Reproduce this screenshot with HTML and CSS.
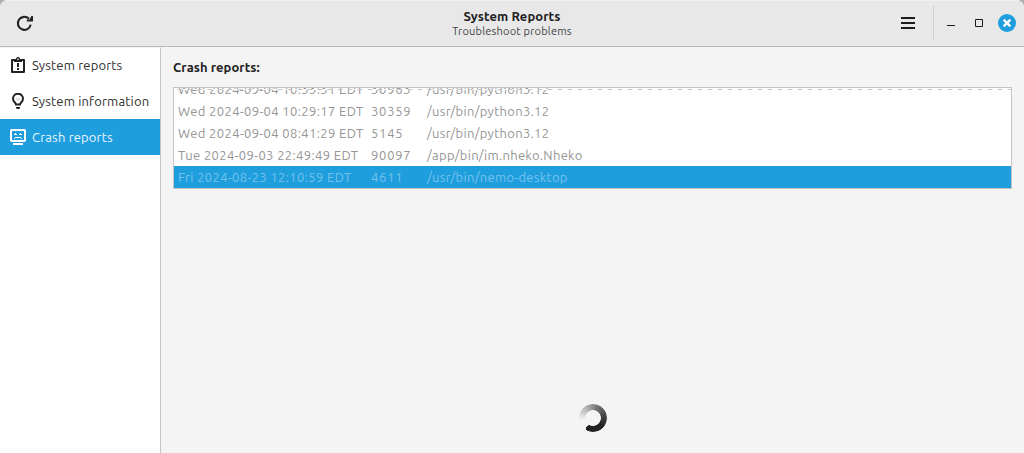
FILE: index.html
```html
<!DOCTYPE html>
<html lang="en">
<head>
<meta charset="utf-8">
<title>System Reports</title>
<link rel="stylesheet" href="styles.css">
</head>
<body>
<div class="window">
  <header class="titlebar">
    <button class="refresh" aria-label="Refresh">
      <svg width="18" height="18" viewBox="0 0 18 18"><path d="M14.7 10.600A6.500 6.500 0 1 1 13 4.800" fill="none" stroke="#222" stroke-width="2.100"/><path d="M17 2v5.500H10.800V5.500h2.800L15.300 2z" fill="#222"/></svg>
    </button>
    <div class="titles">
      <div class="title">System Reports</div>
      <div class="subtitle">Troubleshoot problems</div>
    </div>
    <div class="controls">
      <svg class="menu" width="14" height="12" viewBox="0 0 14 12" fill="#1c1c1c"><path d="M0 0h14v2H0zM0 5h14v2H0zM0 10h14v2H0z"/></svg>
      <span class="divider"></span>
      <svg class="minimize" width="8" height="8" viewBox="0 0 8 8"><path d="M0 6h8v1H0z" fill="#1c1c1c"/></svg>
      <svg class="maximize" width="8" height="8" viewBox="0 0 8 8"><path d="M.5.5h7v7h-7z" fill="none" stroke="#1c1c1c"/></svg>
      <svg class="close" width="18" height="18" viewBox="0 0 18 18"><circle cx="9" cy="9" r="9" fill="#1f9ede"/><path d="M5.600 5.600l6.800 6.800M12.400 5.600l-6.800 6.800" stroke="#fff" stroke-width="2.300"/></svg>
    </div>
  </header>
  <div class="body">
    <nav class="sidebar">
      <div class="item">
        <svg width="16" height="16" viewBox="0 0 16 16"><path d="M2 3h12v12H2z" fill="none" stroke="#222" stroke-width="2" stroke-linejoin="round"/><path d="M4 2h2a2 2 0 0 1 4 0h2v3H4z" fill="#222"/><circle cx="8" cy="2.200" r=".8" fill="#fff"/><path d="M7 6h2v4H7zM7 11h2v2H7z" fill="#222"/></svg>
        <span>System reports</span>
      </div>
      <div class="item">
        <svg width="16" height="16" viewBox="0 0 16 16"><path d="M6 11.500C6 9.700 3 9 3 5.700a5 5 0 0 1 10 0c0 3.300-3 4-3 5.800z" fill="none" stroke="#222" stroke-width="2"/><path d="M6 5.500l2 2 2-2L8 6.500z" stroke="#bbb" stroke-width=".6" fill="none"/><path d="M6 14h4v1l-1 1H7l-1-1z" fill="#222"/></svg>
        <span>System information</span>
      </div>
      <div class="item active">
        <svg width="16" height="16" viewBox="0 0 16 16"><rect x="1" y="1" width="14" height="11" rx=".7" fill="none" stroke="#fff" stroke-width="2"/><path d="M5 4h1v1h1v1H4V5h1zM10 4h1v1h1v1H9V5h1zM5 8h6v1h1v1h-1V9H5v1H4V9h1zM3 14h10v2H3z" fill="#fff"/></svg>
        <span>Crash reports</span>
      </div>
    </nav>
    <main class="content">
      <h1 class="heading">Crash reports:</h1>
      <div class="list">
        <div class="row"><span class="date">Wed 2024-09-04 10:33:31 EDT</span><span class="pid">30963</span><span class="path">/usr/bin/python3.12</span></div>
        <div class="row"><span class="date">Wed 2024-09-04 10:29:17 EDT</span><span class="pid">30359</span><span class="path">/usr/bin/python3.12</span></div>
        <div class="row"><span class="date">Wed 2024-09-04 08:41:29 EDT</span><span class="pid">5145</span><span class="path">/usr/bin/python3.12</span></div>
        <div class="row"><span class="date">Tue 2024-09-03 22:49:49 EDT</span><span class="pid">90097</span><span class="path">/app/bin/im.nheko.Nheko</span></div>
        <div class="row selected"><span class="date">Fri 2024-08-23 12:10:59 EDT</span><span class="pid">4611</span><span class="path">/usr/bin/nemo-desktop</span></div>
        <div class="undershoot"></div>
      </div>
      <div class="loading"><div class="spinner"></div></div>
    </main>
  </div>
</div>
</body>
</html>
```
FILE: styles.css
```css
* { box-sizing: border-box; }
body {
  margin: 0;
  background: #b0b0b0;
  font: 13px/18px Ubuntu, "Noto Sans", sans-serif;
  color: #303030;
}
.window {
  display: flex;
  flex-direction: column;
  height: 453px;
  border-radius: 8px 8px 0 0;
  overflow: hidden;
  background: #f4f4f4;
}
.titlebar {
  display: grid;
  grid-template-columns: 1fr auto 1fr;
  height: 47px;
  flex: none;
  background: #e8e8e8;
  border-bottom: 1px solid #b9b9b9;
  box-shadow: inset 0 1px #f0f0f0;
}
.refresh {
  width: 18px;
  height: 18px;
  margin: 14px 0 0 16px;
  padding: 0;
  border: 0;
  background: none;
}
.refresh svg { display: block; }
.titles { text-align: center; padding-top: 8px; white-space: nowrap; }
.title { font-weight: 700; line-height: 17px; color: #222; letter-spacing: 0.08px; }
.subtitle { font-size: 11px; line-height: 13px; color: #444; letter-spacing: 0.2px; }
.controls { display: flex; justify-content: flex-end; align-items: center; padding-right: 8px; }
.divider { width: 1px; height: 34px; background: #cfcfcf; margin: 0 13px 0 18px; }
.maximize { margin: 0 15px 0 20px; }
.body { display: flex; flex: 1; min-height: 0; }
.sidebar { width: 161px; background: #fff; border-right: 1px solid #c4c4c4; border-top: 1px solid #f0f0f0; }
.item {
  display: flex;
  align-items: center;
  gap: 6px;
  height: 36px;
  padding-left: 10px;
  white-space: nowrap;
  letter-spacing: 0.17px;
}
.item:first-child { margin-top: -1px; }
.active { background: #1f9ede; color: #e9f5fc; }
.content { flex: 1; display: flex; flex-direction: column; padding: 11px 12px 0; }
.heading { margin: 0; font-size: 13px; line-height: 18px; height: 29px; color: #222; letter-spacing: 0.05px; }
.list {
  position: relative;
  display: flex;
  flex-direction: column;
  justify-content: flex-end;
  height: 102px;
  overflow: hidden;
  border: 1px solid #c4c4c4;
  background: #fff;
  color: #959595;
}
.row {
  display: grid;
  grid-template-columns: 193px 56px 1fr;
  height: 22px;
  flex: none;
  padding-left: 4px;
  line-height: 22px;
  white-space: nowrap;
}
.date { letter-spacing: 0.37px; }
.pid { letter-spacing: 0.75px; }
.path { letter-spacing: 0.3px; }
.selected { background: #1f9ede; color: #75c2eb; }
.undershoot {
  position: absolute;
  top: 1px;
  left: 0;
  right: 0;
  height: 1px;
  background: repeating-linear-gradient(90deg, #fff 0 3px, #e6e6e6 3px 4px, #c4c4c4 4px 8px, #e6e6e6 8px 9px, #fff 9px 10px);
}
.loading { padding: 215px 0 0 406px; }
.spinner {
  width: 28px;
  height: 28px;
  border-radius: 50%;
  background:
    radial-gradient(circle at 10.300px 24.500px, #222 0 3px, transparent 3.500px),
    conic-gradient(from 260deg, #f4f4f4 0deg, #aaa 75deg, #777 120deg, #444 180deg, #222 230deg, #222 296deg, transparent 296deg);
  -webkit-mask: radial-gradient(circle, transparent 7.500px, #000 8.200px);
  mask: radial-gradient(circle, transparent 7.500px, #000 8.200px);
}
```
